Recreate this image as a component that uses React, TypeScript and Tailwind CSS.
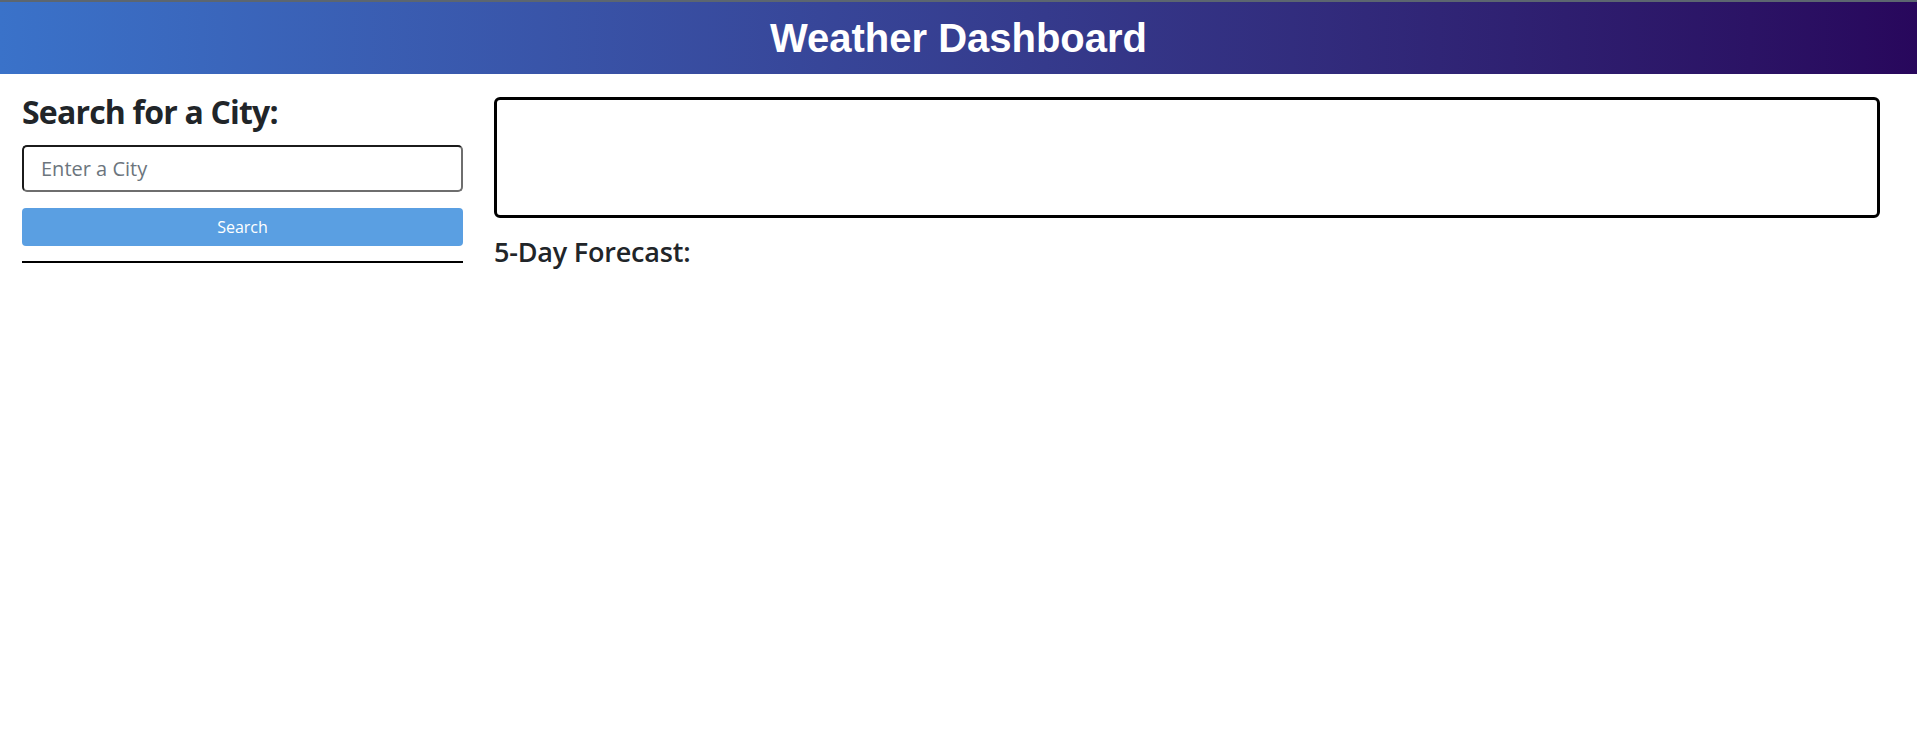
import React from "react";

export default function App() {
  const sans = { fontFamily: '"Open Sans", "Noto Sans", sans-serif' };
  return (
    <div className="min-h-[747px] bg-white text-[#212529]" style={sans}>
      <header className="h-[74px] border-t-2 border-[#5c6670] bg-gradient-to-r from-[#3a72c9] to-[#28075c] flex items-center justify-center">
        <h1
          className="text-white font-bold text-[40px] leading-none"
          style={{ fontFamily: '"Liberation Sans", Arial, sans-serif' }}
        >
          Weather Dashboard
        </h1>
      </header>
      <div className="flex px-[22px] pt-[17px] gap-[31px]">
        <aside className="w-[441px] shrink-0 flex flex-col">
          <h3 className="text-[32px] font-bold leading-[42px] tracking-[-0.8px]">Search for a City:</h3>
          <input
            className="mt-[12px] h-[47px] w-full rounded-[5px] border-2 border-t-[#1b1b1b] border-l-[#1b1b1b] border-b-[#6e6e6e] border-r-[#6e6e6e] px-[17px] text-[20px] placeholder:text-[#6c757d] outline-none"
            placeholder="Enter a City"
          />
          <button className="mt-[16px] h-[38px] w-full rounded-[4px] bg-[#5a9fe2] text-white text-[16px]">
            Search
          </button>
          <hr className="mt-[15px] border-t-2 border-black" />
        </aside>
        <main className="flex-1 mr-[15px] flex flex-col">
          <div className="mt-[6px] h-[121px] rounded-[6px] border-[3px] border-black" />
          <h4 className="mt-[18px] text-[27px] font-semibold leading-[32px] tracking-[-0.2px]">5-Day Forecast:</h4>
        </main>
      </div>
    </div>
  );
}
